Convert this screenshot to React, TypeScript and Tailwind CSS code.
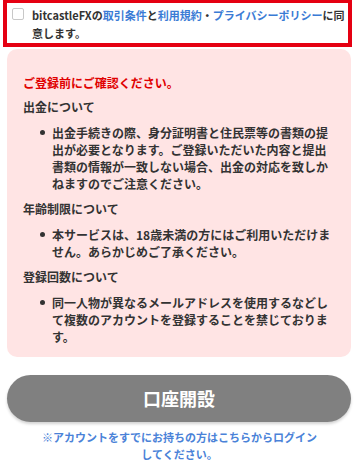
import React from "react";

const font = { fontFamily: '"Noto Sans CJK JP", "Noto Sans", sans-serif' };

function Bullet({ children }: { children: React.ReactNode }) {
  return (
    <div className="flex mt-[9px]">
      <span className="shrink-0 w-[5px] h-[5px] rounded-full bg-[#333333] ml-[17px] mr-[7px] mt-[6px]" />
      <p className="text-[12px] leading-[17px] font-bold text-[#333333] pr-0">{children}</p>
    </div>
  );
}

export default function App() {
  return (
    <div className="w-[359px] h-[470px] bg-white overflow-hidden" style={font}>
      <div className="ml-[3px] w-[349px] h-[47px] border-[4px] border-t-[3px] border-[#e50012] bg-white flex items-start pl-[5px] pt-[3px]">
        <span className="shrink-0 w-[12px] h-[12px] border border-[#c8c8c8] rounded-[2px] bg-white mt-[2px]" />
        <p className="ml-[8px] text-[11px] leading-[18px] font-bold text-[#333333] pr-[2px]">
          bitcastleFXの<span className="text-[#3a7bd5]">取引条件</span>と<span className="text-[#3a7bd5]">利用規約</span>・<span className="text-[#3a7bd5]">プライバシーポリシー</span>に同意します。
        </p>
      </div>

      <div className="ml-[7px] w-[344px] mt-[2px] rounded-[10px] bg-[#ffe4e4] pt-[25px] pb-[12px] pl-[16px] pr-[16px]">
        <p className="text-[12px] leading-[17px] font-bold text-[#e00000]">ご登録前にご確認ください。</p>
        <p className="mt-[7px] text-[12px] leading-[17px] font-bold text-[#333333]">出金について</p>
        <Bullet>出金手続きの際、身分証明書と住民票等の書類の提出が必要となります。ご登録いただいた内容と提出書類の情報が一致しない場合、出金の対応を致しかねますのでご注意ください。</Bullet>
        <p className="mt-[8px] text-[12px] leading-[17px] font-bold text-[#333333]">年齢制限について</p>
        <Bullet>本サービスは、18歳未満の方にはご利用いただけません。あらかじめご了承ください。</Bullet>
        <p className="mt-[8px] text-[12px] leading-[17px] font-bold text-[#333333]">登録回数について</p>
        <Bullet>同一人物が異なるメールアドレスを使用するなどして複数のアカウントを登録することを禁じております。</Bullet>
      </div>

      <button className="ml-[7px] mt-[18px] w-[344px] h-[47px] rounded-full bg-[#808080] text-white text-[18px] font-bold shadow-[0_2px_3px_rgba(0,0,0,0.18)] flex items-center justify-center">
        口座開設
      </button>

      <p className="mx-auto mt-[7px] w-[280px] text-center text-[11px] leading-[17px] font-bold text-[#4a82d8]">
        ※アカウントをすでにお持ちの方はこちらからログインしてください。
      </p>
    </div>
  );
}
